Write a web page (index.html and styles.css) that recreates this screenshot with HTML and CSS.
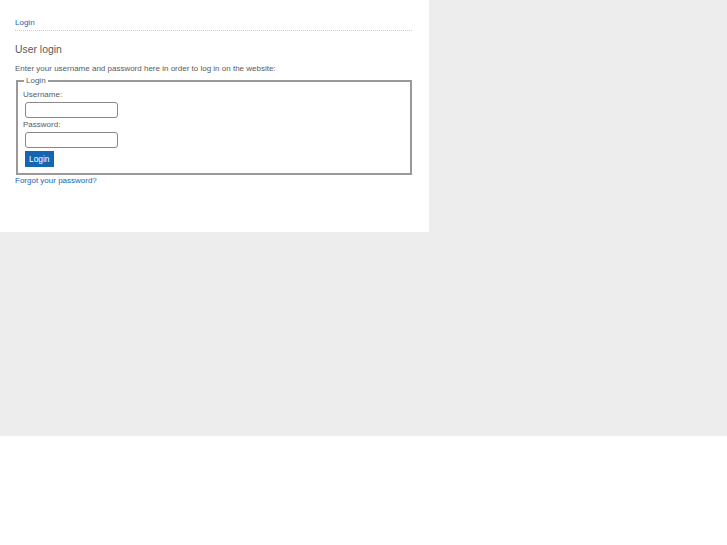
FILE: index.html
```html
<!DOCTYPE html>
<html>
<head>
    <title>User login</title>
    <link rel="stylesheet" href="styles.css">
</head>
<body>
    <div class="page">
        <div class="content">
            <div class="breadcrumb">
                <a href="#">Login</a>
            </div>

            <h1>User login</h1>
            <p class="intro">Enter your username and password here in order to log in on the website:</p>

            <form>
                <fieldset>
                    <legend>Login</legend>
                    <label for="user">Username:</label>
                    <input type="text" id="user">
                    <label for="pass">Password:</label>
                    <input type="password" id="pass">
                    <button type="submit">Login</button>
                </fieldset>
            </form>
            <a href="#" class="forgot">Forgot your password?</a>
        </div>
    </div>
</body>
</html>
```

FILE: styles.css
```css
* {
    margin: 0;
    padding: 0;
    box-sizing: border-box;
}

body {
    font-family: 'Liberation Sans', Arial, sans-serif;
    font-size: 8px;
    color: #5a5a5a;
    background: #fff;
}

a {
    color: #1565b5;
    text-decoration: none;
}

.page {
    height: 436px;
    background: #ededed;
}

.content {
    width: 429px;
    height: 232px;
    background: #fff;
    padding: 17px 17px 0 15px;
}

.breadcrumb {
    padding-bottom: 1px;
    border-bottom: 1px dotted #ccc;
    line-height: 12px;
}

h1 {
    font-size: 10.4px;
    font-weight: normal;
    color: #5a5a5a;
    margin-top: 12px;
    line-height: 14px;
}

.intro {
    margin-top: 6px;
    line-height: 12px;
}

fieldset {
    margin: 0 0 0 1px;
    border: 2px solid #999;
    padding: 2px 5px 6px;
}

legend {
    padding: 0 2px;
    margin-left: 1px;
    line-height: 11px;
}

label {
    display: block;
    line-height: 13px;
}

input {
    display: block;
    width: 93px;
    height: 16px;
    margin: 1px 0 0 2px;
    border: 1px solid #888;
    border-radius: 3px;
    background: #fff;
}

button {
    display: block;
    margin: 3px 0 0 2px;
    height: 16px;
    padding: 0 4px;
    background: #1565b5;
    color: #fff;
    border: 0;
    font-family: inherit;
    font-size: 8.4px;
}

.forgot {
    display: block;
    line-height: 12px;
}
```
